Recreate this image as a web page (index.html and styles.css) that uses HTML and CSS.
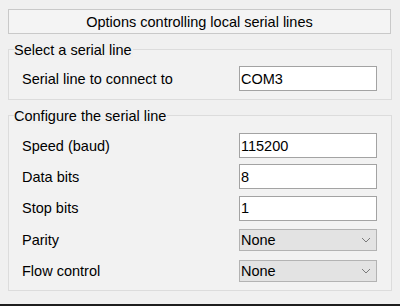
FILE: index.html
```html
<!DOCTYPE html>
<html>
<head>
<meta charset="utf-8">
<link rel="stylesheet" href="styles.css">
</head>
<body>
<div class="page">
  <div class="title">Options controlling local serial lines</div>

  <div class="group g1">
    <span class="legend">Select a serial line</span>
    <div class="row r31">
      <span class="label">Serial line to connect to</span>
      <div class="input">COM3</div>
    </div>
  </div>

  <div class="group g2">
    <span class="legend">Configure the serial line</span>
    <div class="row r31">
      <span class="label">Speed (baud)</span>
      <div class="input">115200</div>
    </div>
    <div class="row r31">
      <span class="label">Data bits</span>
      <div class="input">8</div>
    </div>
    <div class="row r32">
      <span class="label">Stop bits</span>
      <div class="input">1</div>
    </div>
    <div class="row r31">
      <span class="label">Parity</span>
      <div class="select"><span>None</span><svg class="chev" width="10" height="6" viewBox="0 0 10 6"><path d="M1 1 L5 5 L9 1" fill="none" stroke="#7a7a7a" stroke-width="1"/></svg></div>
    </div>
    <div class="row r31">
      <span class="label">Flow control</span>
      <div class="select"><span>None</span><svg class="chev" width="10" height="6" viewBox="0 0 10 6"><path d="M1 1 L5 5 L9 1" fill="none" stroke="#7a7a7a" stroke-width="1"/></svg></div>
    </div>
  </div>
</div>
</body>
</html>
```

FILE: styles.css
```css
html, body {
  margin: 0;
  padding: 0;
  background: #f0f0f0;
}
body {
  width: 400px;
  height: 306px;
  overflow: hidden;
  font-family: "Liberation Sans", Arial, sans-serif;
  font-size: 14.5px;
  color: #000;
}
.page {
  box-sizing: border-box;
  height: 306px;
  padding: 9px 8px 0 8px;
  border-bottom: 2px solid #1e1e1e;
  display: flex;
  flex-direction: column;
}
.title {
  box-sizing: border-box;
  width: 383px;
  height: 25px;
  border: 1px solid #c9c9c9;
  background: #f4f4f4;
  display: flex;
  align-items: center;
  justify-content: center;
  line-height: 16px;
}
.group {
  box-sizing: border-box;
  width: 384px;
  border: 1px solid #dcdcdc;
  background: #f2f2f2;
  margin-top: 15px;
  display: flex;
  flex-direction: column;
}
.g1 {
  padding-bottom: 5px;
}
.g2 {
  padding-bottom: 4px;
}
.legend {
  align-self: flex-start;
  margin: -8px 0 0 5px;
  padding: 0 1px 0 0;
  background: #f0f0f0;
  line-height: 16px;
  height: 16px;
}
.g1 .legend + .row {
  margin-top: 5px;
}
.g2 .legend + .row {
  margin-top: 6px;
}
.row {
  display: flex;
  align-items: center;
  padding: 0 14px 0 13px;
}
.r31 { height: 31px; }
.r32 { height: 32px; }
.label {
  flex: 1;
  line-height: 16px;
}
.input {
  box-sizing: border-box;
  width: 138px;
  height: 25px;
  border: 1px solid #a3a3a3;
  background: #fff;
  padding-left: 1px;
  display: flex;
  align-items: center;
  line-height: 16px;
}
.select {
  box-sizing: border-box;
  width: 138px;
  height: 22px;
  border: 1px solid #b3b3b3;
  background: #e3e3e3;
  padding: 0 5px 0 1px;
  display: flex;
  align-items: center;
  justify-content: space-between;
  line-height: 16px;
}
.chev {
  display: block;
}
```
